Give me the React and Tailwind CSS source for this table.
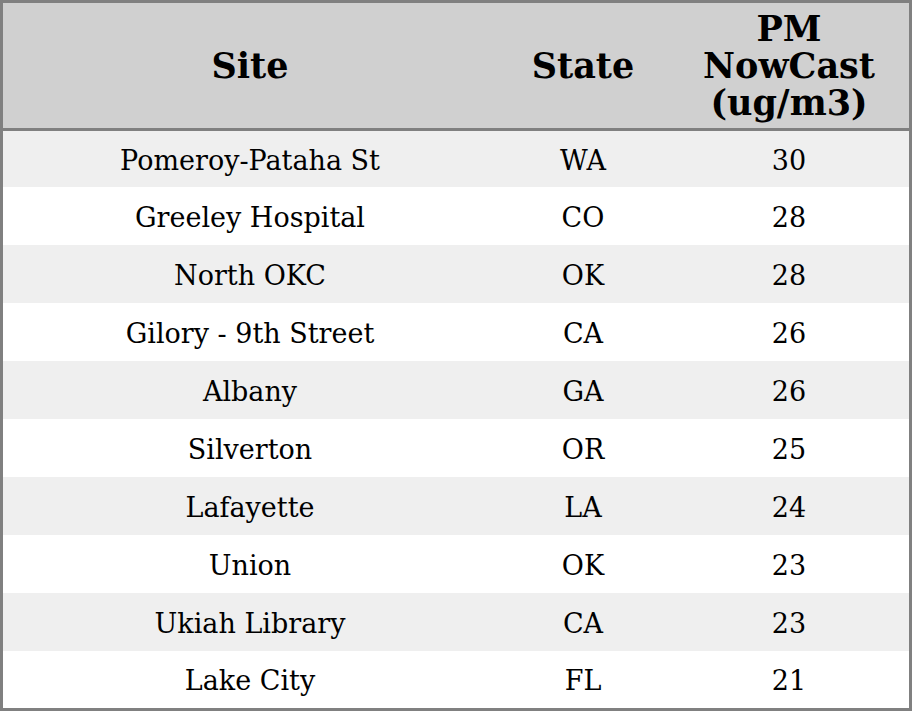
const rows = [
  ['Pomeroy-Pataha St', 'WA', '30'],
  ['Greeley Hospital', 'CO', '28'],
  ['North OKC', 'OK', '28'],
  ['Gilory - 9th Street', 'CA', '26'],
  ['Albany', 'GA', '26'],
  ['Silverton', 'OR', '25'],
  ['Lafayette', 'LA', '24'],
  ['Union', 'OK', '23'],
  ['Ukiah Library', 'CA', '23'],
  ['Lake City', 'FL', '21'],
];

// row heights measured off the screenshot
const heights = ['h-[56px]', 'h-[58px]', 'h-[58px]', 'h-[58px]', 'h-[58px]', 'h-[58px]', 'h-[58px]', 'h-[58px]', 'h-[58px]', 'h-[57px]'];

export default function App() {
  return (
    <div className="w-[912px] h-[711px] bg-white text-black" style={{ fontFamily: '"DejaVu Serif", serif' }}>
      <div className="w-[912px] h-[711px] border-[3px] border-[#808080] flex flex-col">
        <div className="h-[128px] shrink-0 bg-[#d0d0d0] border-b-[3px] border-[#808080] grid grid-cols-[494px_172px_240px] items-center text-center text-[35px] font-bold leading-[37px]">
          <div>Site</div>
          <div>State</div>
          <div>PM<br />NowCast<br />(ug/m3)</div>
        </div>
        {rows.map((r, i) => (
          <div
            key={i}
            className={`${heights[i]} shrink-0 pt-[4px] grid grid-cols-[494px_172px_240px] items-center text-center text-[27px] ${i % 2 === 0 ? 'bg-[#efefef]' : 'bg-white'}`}
          >
            <div>{r[0]}</div>
            <div>{r[1]}</div>
            <div>{r[2]}</div>
          </div>
        ))}
      </div>
    </div>
  );
}
